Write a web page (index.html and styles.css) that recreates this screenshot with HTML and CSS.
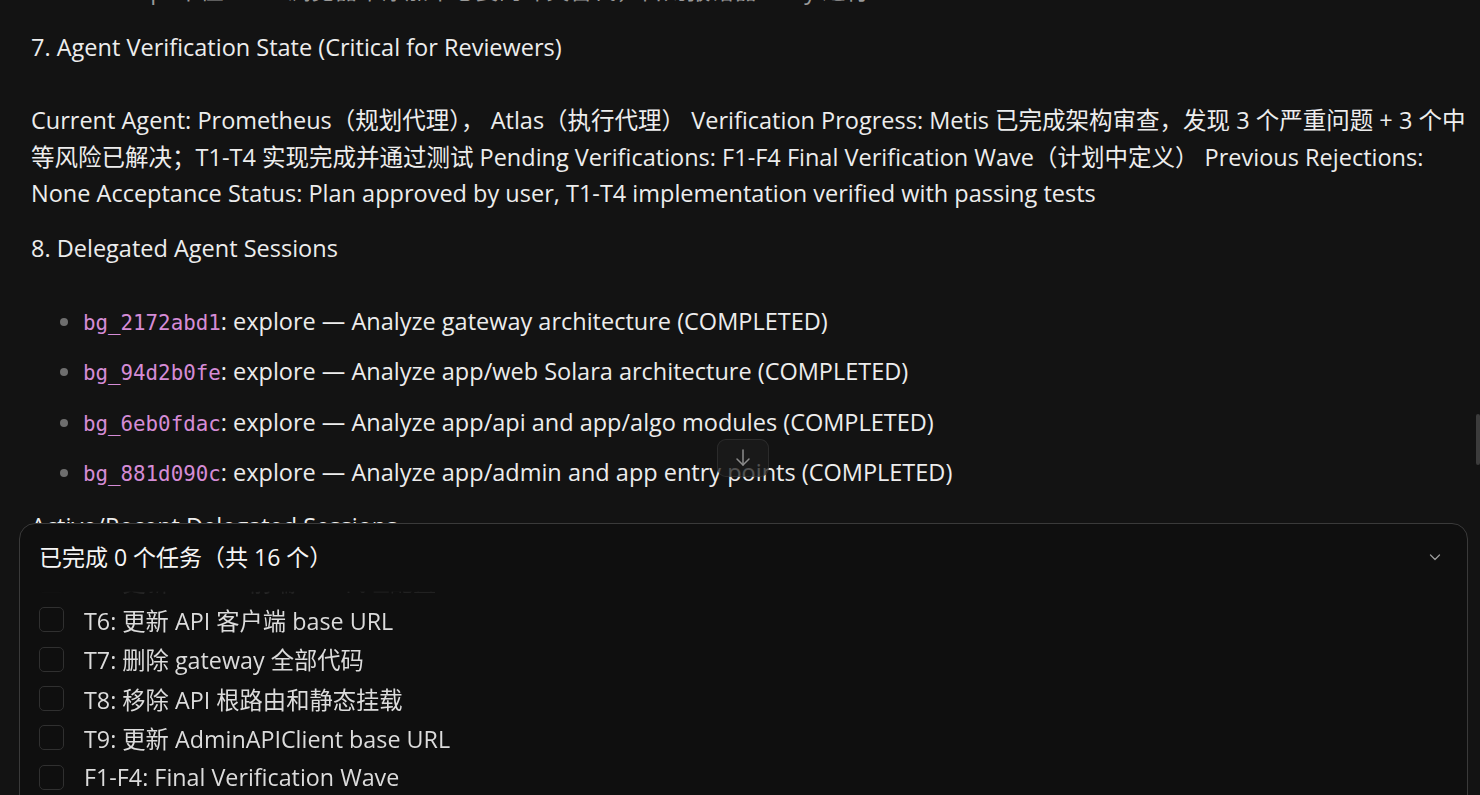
FILE: index.html
```html
<!DOCTYPE html>
<html lang="zh-CN">
<head>
    <meta charset="UTF-8">
    <meta name="viewport" content="width=device-width, initial-scale=1.0">
    <title>Session Summary</title>
    <link rel="stylesheet" href="styles.css">
</head>
<body>

    <div class="page">
        <div class="doc">
            <p class="step-cut">4. Step: 中值 ABCI 浏览器中添加中必要的冲突替代，否则报错器 retry 进行</p>

            <h3 class="sec sec-top">7. Agent Verification State (Critical for Reviewers)</h3>

            <p class="para">Current Agent: Prometheus（规划代理）， Atlas（执行代理） Verification Progress: Metis 已完成架构审查，发现 3 个严重问题 + 3 个中等风险已解决；T1-T4 实现完成并通过测试 Pending Verifications: F1-F4 Final Verification Wave（计划中定义） Previous Rejections: None Acceptance Status: Plan approved by user, T1-T4 implementation verified with passing tests</p>

            <h3 class="sec">8. Delegated Agent Sessions</h3>

            <ul class="sessions">
                <li><code>bg_2172abd1</code>: explore — Analyze gateway architecture (COMPLETED)</li>
                <li><code>bg_94d2b0fe</code>: explore — Analyze app/web Solara architecture (COMPLETED)</li>
                <li><code>bg_6eb0fdac</code>: explore — Analyze app/api and app/algo modules (COMPLETED)</li>
                <li><code>bg_881d090c</code>: explore — Analyze app/admin and app entry points (COMPLETED)</li>
            </ul>

            <h3 class="sec">Active/Recent Delegated Sessions</h3>
        </div>

        <button class="to-bottom" title="Scroll to bottom">
            <svg width="20" height="20" viewBox="0 0 20 20" fill="none" stroke="currentColor" stroke-width="1.5" stroke-linecap="round" stroke-linejoin="round">
                <path d="M10 2v15"/>
                <path d="M4 11l6 6 6-6"/>
            </svg>
        </button>

        <div class="scroll-thumb"></div>

        <!-- task panel docked over the bottom of the transcript -->
        <section class="todo">
            <div class="todo-head">
                <span>已完成 0 个任务（共 16 个）</span>
                <svg class="chev" width="14" height="14" viewBox="0 0 14 14" fill="none" stroke="currentColor" stroke-width="1.3" stroke-linecap="round" stroke-linejoin="round">
                    <path d="M2.5 5l4.5 4.5L11.5 5"/>
                </svg>
            </div>
            <div class="todo-view">
                <ul class="todo-list">
                    <li><span class="box"></span>T5: 更新 Solara 前端 API 代理配置</li>
                    <li><span class="box"></span>T6: 更新 API 客户端 base URL</li>
                    <li><span class="box"></span>T7: 删除 gateway 全部代码</li>
                    <li><span class="box"></span>T8: 移除 API 根路由和静态挂载</li>
                    <li><span class="box"></span>T9: 更新 AdminAPIClient base URL</li>
                    <li><span class="box"></span>F1-F4: Final Verification Wave</li>
                </ul>
            </div>
        </section>
    </div>

</body>
</html>
```

FILE: styles.css
```css
body {
    margin: 0;
    background: #131313;
    color: #ededed;
    font-family: "Open Sans", "Noto Sans CJK SC", sans-serif;
    font-size: 23.5px;
    overflow: hidden;
}

.page {
    position: relative;
    height: 795px;
    overflow: hidden;
}

.doc {
    padding: 0 8px 0 31px;
    line-height: 36.5px;
}

.step-cut {
    margin: -28px 0 20px 59px;
    color: #9a9a9a;
}

/* headings are plain weight in the transcript */
.sec {
    font-size: 23.5px;
    font-weight: normal;
    margin: 18px 0 37px;
}

.sec-top {
    margin-top: 0;
}

.para {
    margin: 0;
}

.sessions {
    margin: 0;
    padding-left: 52px;
}

.sessions li {
    margin-bottom: 13.8px;
}

.sessions li::marker {
    color: #6e6e6e;
}

code {
    font-family: "DejaVu Sans Mono", monospace;
    font-size: 20.8px;
    line-height: 1;
    color: #d58cd6;
}

.to-bottom {
    position: absolute;
    left: 717px;
    top: 439px;
    width: 52px;
    height: 38px;
    padding: 0;
    border: 1px solid rgba(255, 255, 255, 0.08);
    border-radius: 9px;
    background: rgba(28, 28, 28, 0.75);
    color: #8c8c8c;
    display: flex;
    align-items: center;
    justify-content: center;
}

.scroll-thumb {
    position: absolute;
    right: 0;
    top: 414px;
    width: 4px;
    height: 51px;
    border-radius: 2px;
    background: #3c3c3c;
}

.todo {
    position: absolute;
    left: 19px;
    right: 12px;
    top: 523px;
    bottom: -30px;
    background: #0f0f0f;
    border: 1px solid #3a3a3a;
    border-radius: 16px;
    padding: 15px 0 0 19px;
}

.todo-head {
    display: flex;
    align-items: center;
    justify-content: space-between;
    font-size: 23px;
    line-height: 36px;
    color: #f6f6f6;
    padding-right: 25px;
}

.chev {
    color: #9a9a9a;
}

.todo-view {
    margin-top: 11px;
    height: 240px;
    overflow: hidden;
    -webkit-mask-image: linear-gradient(to bottom, transparent 0, transparent 5px, rgba(0, 0, 0, 0.3) 10px, #000 20px);
    mask-image: linear-gradient(to bottom, transparent 0, transparent 5px, rgba(0, 0, 0, 0.3) 10px, #000 20px);
}

.todo-list {
    list-style: none;
    margin: -25px 0 0;
    padding: 0;
    color: #dcdcdc;
    font-size: 23.3px;
}

.todo-list li {
    display: flex;
    align-items: center;
    gap: 20px;
    height: 39.3px;
}

.box {
    width: 23px;
    height: 23px;
    border: 1px solid #303030;
    border-radius: 5px;
    flex: none;
}
```
